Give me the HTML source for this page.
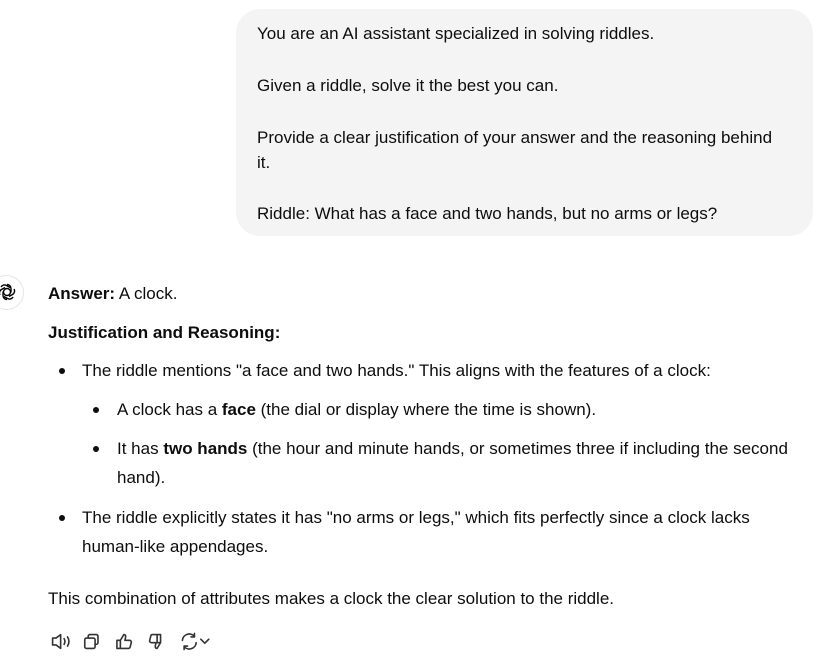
<!DOCTYPE html>
<html><head><meta charset="utf-8"><style>
body{margin:0;width:825px;height:657px;background:#fff;font-family:"Liberation Sans",sans-serif;color:#0d0d0d;font-size:17px;position:relative;overflow:hidden}
.bubble{position:absolute;left:236px;top:9px;width:577px;height:227px;background:#f4f4f4;border-radius:24px}
.t{position:absolute;white-space:nowrap;line-height:20px}
.dot{position:absolute;width:6px;height:6px;border-radius:50%;background:#0d0d0d}
b{font-weight:bold}
</style></head><body>
<div class="bubble"></div>
<div class="t" style="left:257px;top:24px">You are an AI assistant specialized in solving riddles.</div>
<div class="t" style="left:257px;top:76px">Given a riddle, solve it the best you can.</div>
<div class="t" style="left:257px;top:128px">Provide a clear justification of your answer and the reasoning behind</div>
<div class="t" style="left:257px;top:153px">it.</div>
<div class="t" style="left:257px;top:204px">Riddle: What has a face and two hands, but no arms or legs?</div>

<div style="position:absolute;left:-11px;top:275px;width:33px;height:33px;border:1px solid #e5e5e5;border-radius:50%"></div>
<svg style="position:absolute;left:-3px;top:282px" width="20" height="20" viewBox="0 0 20 20" fill="none" stroke="#000" stroke-width="1.4"><circle cx="10" cy="10" r="3.5"/><path d="M10 2.5a4 4 0 0 1 4 4v4M17 7a4 4 0 0 1-1.5 5.5l-3.5 2M16 15a4 4 0 0 1-5.5 1.5l-3.5-2M10 17.5a4 4 0 0 1-4-4v-4M3 13a4 4 0 0 1 1.5-5.5l3.5-2M4 5a4 4 0 0 1 5.5-1.5l3.5 2"/></svg>

<div class="t" style="left:48px;top:284px"><b>Answer:</b> A clock.</div>
<div class="t" style="left:48px;top:323px"><b>Justification and Reasoning:</b></div>
<div class="dot" style="left:59px;top:368px"></div>
<div class="t" style="left:82px;top:361px">The riddle mentions "a face and two hands." This aligns with the features of a clock:</div>
<div class="dot" style="left:93px;top:407px"></div>
<div class="t" style="left:117px;top:400px">A clock has a <b>face</b> (the dial or display where the time is shown).</div>
<div class="dot" style="left:93px;top:446px"></div>
<div class="t" style="left:117px;top:439px">It has <b>two hands</b> (the hour and minute hands, or sometimes three if including the second</div>
<div class="t" style="left:117px;top:468px">hand).</div>
<div class="dot" style="left:59px;top:515px"></div>
<div class="t" style="left:82px;top:508px">The riddle explicitly states it has "no arms or legs," which fits perfectly since a clock lacks</div>
<div class="t" style="left:82px;top:537px">human-like appendages.</div>
<div class="t" style="left:48px;top:589px">This combination of attributes makes a clock the clear solution to the riddle.</div>

<svg style="position:absolute;left:48px;top:630px" width="170" height="23" viewBox="0 0 148 20" fill="none" stroke="#333" stroke-width="1.4" stroke-linejoin="round" stroke-linecap="round">
<path d="M4 7h3l4-3v12l-4-3H4z"/><path d="M14 7.5q1.5 2.5 0 5M17 6q2.5 4 0 8"/>
<rect x="32" y="7" width="9" height="9" rx="1.5"/><path d="M35 7V5.5A1.5 1.5 0 0 1 36.5 4H42A1.5 1.5 0 0 1 43.5 5.5V11A1.5 1.5 0 0 1 42 12.5H41"/>
<path d="M63 9v7h-3V9zM63 9l3-5q2 0 1.5 2.5L67 9h4a1.5 1.5 0 0 1 1.5 1.8l-1 4A1.5 1.5 0 0 1 70 16h-7"/>
<path d="M98 11V4h-3v7zM98 11l-3 5q-2 0-1.5-2.5L94 11h-4a1.5 1.5 0 0 1-1.5-1.8l1-4A1.5 1.5 0 0 1 91 4h7"/>
<path d="M117 9a6 6 0 0 1 10.5-3.5M127.5 3v3h-3M129 11a6 6 0 0 1-10.5 3.5M118.5 17v-3h3"/>
<path d="M133 8l3.5 3.5L140 8"/>
</svg>
</body></html>
